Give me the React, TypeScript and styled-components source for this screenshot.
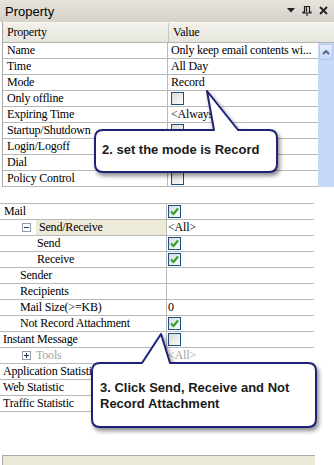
import React from 'react';
import styled, { createGlobalStyle } from 'styled-components';

const GlobalStyle = createGlobalStyle`
  html, body { margin: 0; padding: 0; background: #fff; }
  body { font-family: "Liberation Serif", "Times New Roman", serif; }
`;

const Page = styled.div`
  position: relative;
  width: 334px;
  height: 465px;
  overflow: hidden;
  background: #fff;
  display: flex;
  flex-direction: column;
`;

const TitleBar = styled.div`
  height: 22px;
  box-sizing: border-box;
  display: flex;
  align-items: center;
  justify-content: space-between;
  padding: 0 5px 0 5px;
  background: linear-gradient(#e6e4dd, #d4d1c9);
  font: 13px "Liberation Sans", Arial, sans-serif;
  color: #000;
`;

const TopPanel = styled.div`
  display: flex;
  flex-direction: column;
  height: 165px;
  margin-left: 2px;
  border-left: 1px solid #a8a8a8;
`;

const HeaderRow = styled.div`
  height: 21px;
  box-sizing: border-box;
  display: grid;
  grid-template-columns: 165px 1fr;
  align-items: center;
  background: linear-gradient(#f1f0ea, #e6e5de);
  border-top: 1px solid #f8f8f4;
  border-bottom: 1px solid #b4b3ab;
  font-size: 12px;
  letter-spacing: -0.2px;
`;

const HeaderCell = styled.div`
  padding-left: 4px;
  height: 100%;
  display: flex;
  align-items: center;
  box-sizing: border-box;
  & + & {
    border-left: 1px solid #c8c7c0;
  }
`;

const TopBody = styled.div`
  display: flex;
  flex: 1;
`;

const TopRows = styled.div`
  width: 315px;
  display: flex;
  flex-direction: column;
`;

const Scrollbar = styled.div`
  flex: 1;
  display: flex;
  flex-direction: column;
  padding: 1px 1px 0 1px;
  background: #c7d7f8;
`;

const ScrollButton = styled.div`
  height: 14px;
  border: 1px solid #b5c8ee;
  border-radius: 2px;
  background: linear-gradient(#e6eefc, #c3d5fa);
  display: flex;
  align-items: center;
  justify-content: center;
`;

const Row = styled.div<{ $label: number }>`
  height: 16px;
  box-sizing: border-box;
  display: grid;
  grid-template-columns: ${(p) => p.$label}px 1fr;
  border-bottom: 1px solid #b8b8b8;
  font-size: 12px;
  letter-spacing: -0.2px;
  line-height: 15px;
`;

const LabelCell = styled.div<{ $indent: number; $muted?: boolean }>`
  display: flex;
  align-items: center;
  padding-left: ${(p) => p.$indent}px;
  border-right: 1px solid #b8b8b8;
  white-space: nowrap;
  overflow: hidden;
  color: ${(p) => (p.$muted ? '#a3a3a3' : '#000')};
`;

const LabelText = styled.span<{ $selected?: boolean }>`
  flex: 1;
  height: 100%;
  display: flex;
  align-items: center;
  padding-left: ${(p) => (p.$selected ? 3 : 0)}px;
  background: ${(p) => (p.$selected ? '#eeead9' : 'transparent')};
`;

const ValueCell = styled.div<{ $pad: number; $muted?: boolean }>`
  display: flex;
  align-items: center;
  padding-left: ${(p) => p.$pad}px;
  white-space: nowrap;
  overflow: hidden;
  color: ${(p) => (p.$muted ? '#a3a3a3' : '#000')};
`;

const Gap = styled.div`
  height: 16px;
  border-bottom: 1px solid #b8b8b8;
  width: 314px;
`;

const BottomGrid = styled.div`
  display: flex;
  flex-direction: column;
  width: 314px;
`;

const Footer = styled.div`
  margin-top: auto;
  height: 9px;
  margin-left: 2px;
  width: 312px;
  border-top: 1px solid #a8a8a8;
  border-left: 1px solid #a8a8a8;
  background: #ece9d8;
`;

const Box = styled.span`
  width: 11px;
  height: 11px;
  border: 1px solid #1d5082;
  background: linear-gradient(135deg, #dcdcd6, #fbfbf9);
  display: inline-flex;
  align-items: center;
  justify-content: center;
`;

const TreeGlyph = styled.span`
  width: 7px;
  height: 7px;
  border: 1px solid #8a9bb2;
  background: #fff;
  margin-right: 5px;
  position: relative;
  flex-shrink: 0;
`;

const CalloutText = styled.div<{ $x: number; $y: number }>`
  position: absolute;
  left: ${(p) => p.$x}px;
  top: ${(p) => p.$y}px;
  font: bold 13px/16px "Liberation Sans", Arial, sans-serif;
  color: #1a1a1a;
  white-space: nowrap;
`;

const Overlay = styled.svg`
  position: absolute;
  left: 0;
  top: 0;
  pointer-events: none;
  filter: drop-shadow(2px 3px 2px rgba(0, 0, 0, 0.45));
`;

const Check = ({ on }: { on?: boolean }) => (
  <Box>
    {on && (
      <svg width="9" height="9" viewBox="0 0 9 9">
        <path d="M1 4.5 L3.5 7 L8 1.5" fill="none" stroke="#2ca02c" strokeWidth="2" />
      </svg>
    )}
  </Box>
);

const Tree = ({ open }: { open?: boolean }) => (
  <TreeGlyph>
    <svg width="7" height="7" viewBox="0 0 7 7" style={{ position: 'absolute', left: 0, top: 0 }}>
      <path d="M1 3.5 H6" stroke="#333" strokeWidth="1" />
      {!open && <path d="M3.5 1 V6" stroke="#333" strokeWidth="1" />}
    </svg>
  </TreeGlyph>
);

type Pt = [number, number];

const Callout = ({ x, y, w, h, tip, base }: { x: number; y: number; w: number; h: number; tip: Pt; base: Pt }) => {
  const r = 8;
  const d = `M${x + r},${y} L${base[0]},${y} L${tip[0]},${tip[1]} L${base[1]},${y} L${x + w - r},${y}
    Q${x + w},${y} ${x + w},${y + r} L${x + w},${y + h - r} Q${x + w},${y + h} ${x + w - r},${y + h}
    L${x + r},${y + h} Q${x},${y + h} ${x},${y + h - r} L${x},${y + r} Q${x},${y} ${x + r},${y} Z`;
  return (
    <Overlay width="334" height="465">
      <path d={d} fill="#fff" stroke="#1f2378" strokeWidth="2" strokeLinejoin="round" />
    </Overlay>
  );
};

type TopItem = { label: string; value?: string; box?: boolean };
const topRows: TopItem[] = [
  { label: 'Name', value: 'Only keep email contents wi...' },
  { label: 'Time', value: 'All Day' },
  { label: 'Mode', value: 'Record' },
  { label: 'Only offline', box: true },
  { label: 'Expiring Time', value: '<Always>' },
  { label: 'Startup/Shutdown', box: true },
  { label: 'Login/Logoff', box: true },
  { label: 'Dial', box: true },
  { label: 'Policy Control', box: true },
];

type BottomItem = {
  label: string;
  indent: number;
  value?: string;
  box?: boolean;
  on?: boolean;
  tree?: 'open' | 'closed';
  selected?: boolean;
  muted?: boolean;
};
const bottomRows: BottomItem[] = [
  { label: 'Mail', indent: 4, box: true, on: true },
  { label: 'Send/Receive', indent: 22, tree: 'open', selected: true, value: '<All>' },
  { label: 'Send', indent: 37, box: true, on: true },
  { label: 'Receive', indent: 37, box: true, on: true },
  { label: 'Sender', indent: 20 },
  { label: 'Recipients', indent: 20 },
  { label: 'Mail Size(>=KB)', indent: 20, value: '0' },
  { label: 'Not Record Attachment', indent: 20, box: true, on: true },
  { label: 'Instant Message', indent: 3, box: true },
  { label: 'Tools', indent: 22, tree: 'closed', muted: true, value: '<All>' },
  { label: 'Application Statistic', indent: 3 },
  { label: 'Web Statistic', indent: 3 },
  { label: 'Traffic Statistic', indent: 3 },
];

export default function App() {
  return (
    <Page>
      <GlobalStyle />
      <TitleBar>
        <span>Property</span>
        <svg width="42" height="10" viewBox="0 0 42 10">
          <path d="M0 2 H8 L4 6.5 Z" fill="#222" />
          <path d="M17.5 0.5 H22.5 V6 H24 V7 H16 V6 H17.5 Z M19.5 1 V6" fill="none" stroke="#222" strokeWidth="1.2" />
          <path d="M20 7 V10" stroke="#222" strokeWidth="1.2" />
          <path d="M33 1 L40 8 M40 1 L33 8" stroke="#222" strokeWidth="1.8" />
        </svg>
      </TitleBar>
      <TopPanel>
        <HeaderRow>
          <HeaderCell>Property</HeaderCell>
          <HeaderCell>Value</HeaderCell>
        </HeaderRow>
        <TopBody>
          <TopRows>
            {topRows.map((r) => (
              <Row key={r.label} $label={165}>
                <LabelCell $indent={4}>{r.label}</LabelCell>
                <ValueCell $pad={3}>{r.box ? <Check /> : r.value}</ValueCell>
              </Row>
            ))}
          </TopRows>
          <Scrollbar>
            <ScrollButton>
              <svg width="8" height="6" viewBox="0 0 8 6">
                <path d="M1 5 L4 2 L7 5" fill="none" stroke="#4d6185" strokeWidth="1.8" />
              </svg>
            </ScrollButton>
          </Scrollbar>
        </TopBody>
      </TopPanel>
      <Gap />
      <BottomGrid>
        {bottomRows.map((r) => (
          <Row key={r.label} $label={167}>
            <LabelCell $indent={r.indent} $muted={r.muted}>
              {r.tree && <Tree open={r.tree === 'open'} />}
              <LabelText $selected={r.selected}>{r.label}</LabelText>
            </LabelCell>
            <ValueCell $pad={1} $muted={r.muted}>
              {r.box ? <Check on={r.on} /> : r.value}
            </ValueCell>
          </Row>
        ))}
      </BottomGrid>
      <Footer />

      <Callout x={95} y={130} w={182} h={42} tip={[207, 91]} base={[214, 238]} />
      <CalloutText $x={102} $y={142}>2. set the mode is Record</CalloutText>

      <Callout x={92} y={363} w={224} h={64} tip={[161, 334]} base={[142, 170]} />
      <CalloutText $x={100} $y={380}>
        3. Click Send, Receive and Not
        <br />
        Record Attachment
      </CalloutText>
    </Page>
  );
}
